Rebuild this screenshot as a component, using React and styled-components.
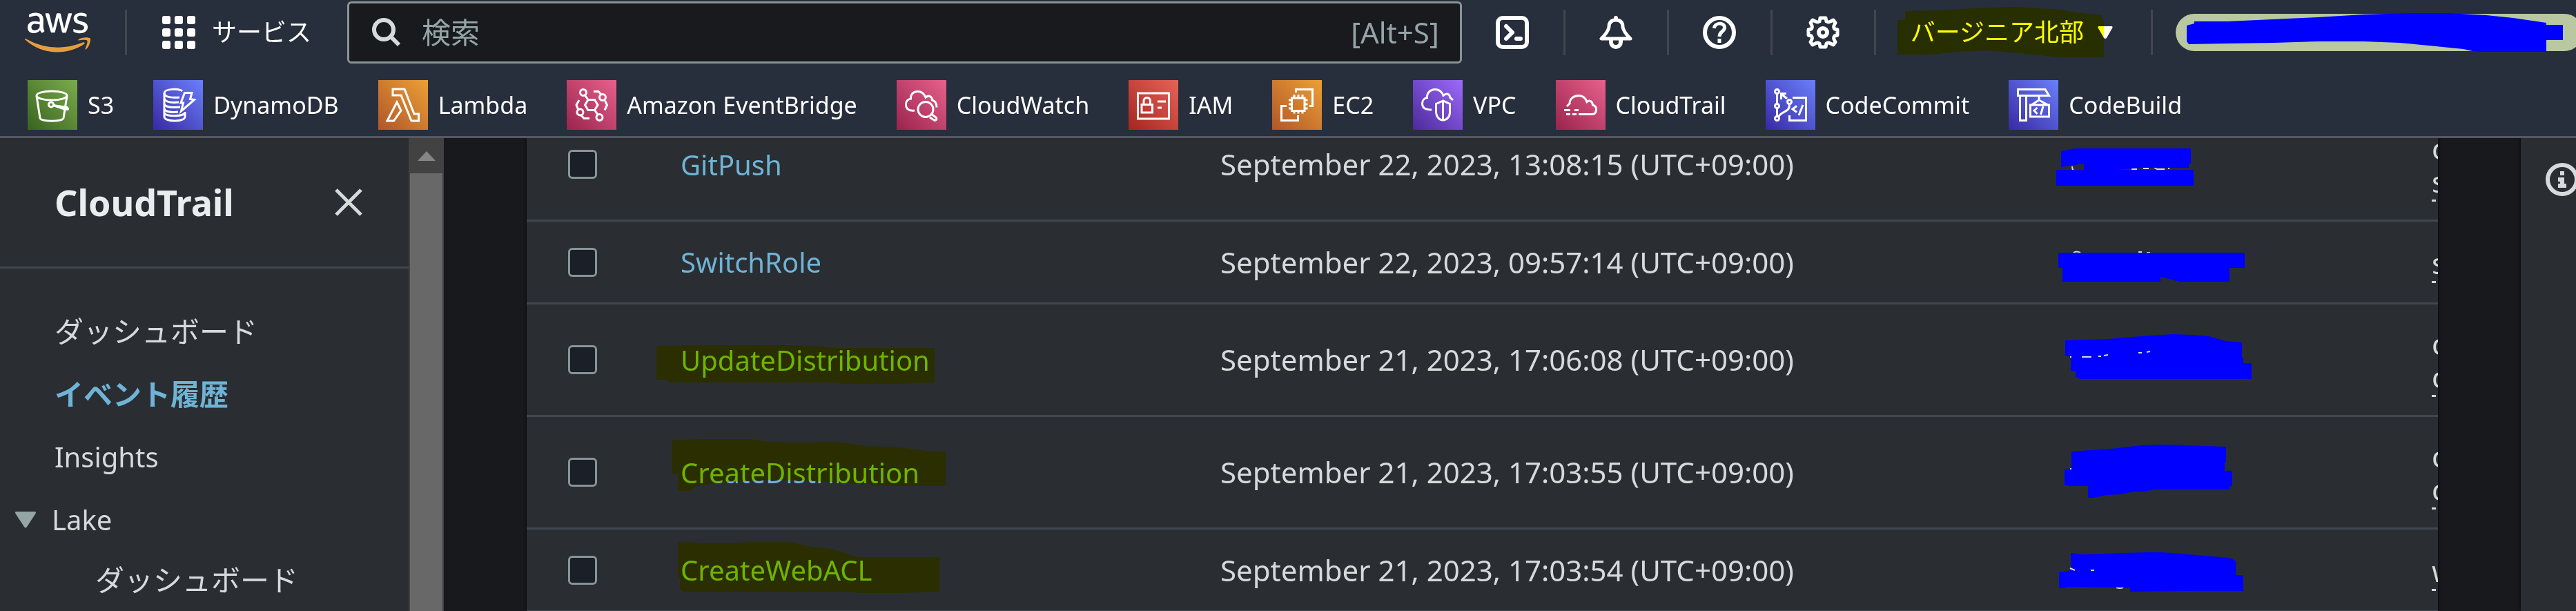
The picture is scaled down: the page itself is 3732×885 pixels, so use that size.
import React, { useState } from 'react'
import styled, { createGlobalStyle } from 'styled-components'
import { FaAws } from 'react-icons/fa'

const GlobalStyle = createGlobalStyle`
    * {
        box-sizing: border-box;
    }

    body {
        margin: 0;
        background: #18191d;
        color: #d5dbdb;
        font-family: "Noto Sans", "Noto Sans CJK JP", sans-serif;
        font-size: 42px;
        line-height: 48px;
    }

    button, input {
        font: inherit;
        color: inherit;
    }

    a {
        color: inherit;
        text-decoration: none;
    }
`

const Page = styled.div`
    display: flex;
    flex-direction: column;
    height: 100vh;
`

const Header = styled.header`
    flex-shrink: 0;
    overflow: hidden;
    background: #272e3c;
    border-bottom: 3px solid #555863;
    color: #fff;
`

const TopBar = styled.div`
    display: flex;
    align-items: center;
    padding: 2px 0 0 36px;
`

const LogoLink = styled.a`
    display: flex;

    path {
        fill: url(#logo-fill);
    }
`

const LogoIcon = styled(FaAws)`
    width: 95px;
    height: 76px;
`

const PlainButton = styled.button`
    display: flex;
    align-items: center;
    flex-shrink: 0;
    padding: 0;
    border: 0;
    background: none;
    cursor: pointer;
`

const ServicesButton = styled(PlainButton)`
    height: 66px;
    margin-left: 50px;
    padding: 0 52px 0 51px;
    gap: 24px;
    border-left: 3px solid #424650;
    font-size: 36px;
    white-space: nowrap;
`

const SearchBox = styled.form`
    display: flex;
    align-items: center;
    flex: 1;
    height: 90px;
    padding: 0 30px 0 33px;
    gap: 30px;
    border: 3px solid #879596;
    border-radius: 6px;
    background: #191a1e;
    color: #95a5a6;

    input {
        flex: 1;
        min-width: 0;
        padding: 0;
        border: 0;
        outline: 0;
        background: none;
    }

    input::placeholder {
        color: #95a5a6;
        opacity: 1;
    }
`

const ToolButton = styled(PlainButton)`
    justify-content: center;
    width: 150px;
    height: 66px;
    border-right: 3px solid #424650;
`

const RegionButton = styled(PlainButton)`
    position: relative;
    height: 66px;
    padding: 0 55px 0 50px;
    gap: 20px;
    border-right: 3px solid #424650;
    font-size: 36px;
    white-space: nowrap;
`

const AccountButton = styled(PlainButton)`
    position: relative;
    width: 590px;
    height: 54px;
    margin: 0 -10px 0 33px;
    border-radius: 27px;
    background: #b9c8a1;
`

const AccountMask = styled.svg`
    position: absolute;
    left: 0;
    top: -2px;
    fill: #00f;
`

/* marker pen drawn over a label */
const Marker = styled.svg`
    position: absolute;
    left: ${(props) => props.$left}px;
    top: ${(props) => props.$top}px;
    fill: #ff0;
    mix-blend-mode: multiply;
    pointer-events: none;
`

const Favorites = styled.nav`
    display: flex;
    gap: 57px;
    padding: 24px 40px 9px;
`

const Favorite = styled.a`
    display: flex;
    align-items: center;
    gap: 15px;
    font-size: 34px;
    white-space: nowrap;
`

const Tile = styled.span`
    display: flex;
    width: 72px;
    height: 72px;
    background: linear-gradient(45deg, ${(props) => props.$from}, ${(props) => props.$to});
`

const Body = styled.div`
    display: flex;
    flex: 1;
    min-height: 0;
    overflow: hidden;
`

const Sidebar = styled.aside`
    flex: 0 0 592px;
    overflow: hidden;
    background: #2a2e33;
`

const SideHead = styled.div`
    display: flex;
    align-items: center;
    justify-content: space-between;
    height: 189px;
    padding: 0 67px 0 79px;
    border-bottom: 3px solid #414750;

    h2 {
        margin: 0;
        color: #eaeded;
        font-size: 52px;
        font-weight: 700;
    }
`

const SideList = styled.ul`
    list-style: none;
    margin: 0;
    padding: 45px 0 0 79px;
`

const SubList = styled.ul`
    list-style: none;
    margin: 0;
    padding: 0 0 0 59px;
`

const SideItem = styled.li`
    color: ${(props) => props.$active ? "#6fb4d6" : "#d5dbdb"};
    font-size: ${(props) => props.$latin ? "40px" : "42px"};
    font-weight: ${(props) => props.$active ? 700 : 400};

    > a, > button {
        display: flex;
        align-items: center;
        height: ${(props) => props.$sub ? "84px" : "91px"};
    }

    > button {
        margin-left: -57px;
        gap: 23px;
    }
`

const Scrollbar = styled.div`
    display: flex;
    flex-direction: column;
    flex: 0 0 51px;
    padding: 0 2px;
    background: #424242;
`

const ScrollUp = styled(PlainButton)`
    justify-content: center;
    height: 51px;
`

const ScrollThumb = styled.div`
    flex: 1;
    background: #686868;
`

const Content = styled.main`
    flex: 1;
    min-width: 0;
    padding: 0 120px;
    overflow: hidden;
`

const Panel = styled.section`
    height: 100%;
    overflow: hidden;
    background: #2a2e33;
    box-shadow: 0 0 4px #000;
`

/* the list is scrolled a little way under the header */
const EventTable = styled.table`
    width: 100%;
    margin-top: -42px;
    table-layout: fixed;
    border-collapse: separate;
    border-spacing: 0;

    td {
        height: 120px;
        padding: 0;
        border-bottom: 3px solid #414750;
        vertical-align: middle;
        white-space: nowrap;
    }

    tr.tall td {
        height: 163px;
    }
`

const Col = styled.col`
    width: ${(props) => props.$width};
`

const CheckBox = styled.input`
    appearance: none;
    display: block;
    width: 42px;
    height: 42px;
    margin: 0 0 0 60px;
    border: 3px solid #879596;
    border-radius: 6px;
    background: #1b1f28;

    &:checked {
        background: #6fb4d6;
    }
`

const EventLink = styled.a`
    position: relative;
    display: inline-block;
    color: #6fb4d6;
    font-size: 40px;
`

const Redacted = styled.svg`
    display: block;
    fill: #00f;

    .rest {
        fill: none;
        stroke: #d5dbdb;
        stroke-width: 2;
    }
`

const Source = styled.div`
    padding: 7px 0 5px;
    background: repeating-linear-gradient(90deg, #d5dbdb 0 6px, transparent 6px 12px) left bottom / 100% 3px no-repeat;

    span {
        display: block;
    }
`

const HelpPanel = styled.aside`
    flex: 0 0 80px;
    padding: 36px 0 0 36px;
    overflow: hidden;
    background: #2a2e33;
    box-shadow: 0 0 4px #000;
`

const favorites = [
    {
        name: "S3", from: "#38641e", to: "#7bab4d",
        icon: <>
            <ellipse cx="35" cy="22.5" rx="22" ry="6.5" />
            <path d="M13 23L18 55C19 60.500 51 60.500 52 55L57 23" />
            <circle cx="34" cy="35.500" r="3.500" />
            <path d="M37 36.500L57 39.500C61 42.500 57 43.500 52 41.500L37 36.500" />
        </>
    },
    {
        name: "DynamoDB", from: "#3829a4", to: "#6a80fa",
        icon: <>
            <path d="M42 16C38 12 16 12 16 19V53C16 61 46 61 46 53V46" />
            <path d="M16 19C16 25 28 26 38 25M16 27C18 32 27 33 37 32M16 35C18 39 28 40 39 39M16 42C18 46 26 47 36 46M16 48C20 53 40 53 46 48" />
            <path d="M45.500 18.500H56L53.500 27.500L59.500 28.500L40.500 45L43.500 33H40Z" />
        </>
    },
    {
        name: "Lambda", from: "#b05629", to: "#eca035",
        icon: <path d="M21 13H38L52 49H58.500V59H48L33 22H21ZM27 32L13 59H22.500L33 44Z" />
    },
    {
        name: "Amazon EventBridge", from: "#99244c", to: "#e8618d",
        icon: <>
            <circle cx="24" cy="18" r="4.500" />
            <circle cx="52" cy="25" r="4.500" />
            <circle cx="19.500" cy="46.500" r="4.500" />
            <circle cx="47.500" cy="54" r="4.500" />
            <path d="M31 28.500H40.500L45 36L40.500 43.500H31L26.500 36ZM26.500 22L31 28.500M40.500 43.500L45 50M39 16.500H46L50 21M21 51L25 55.500H33M18 29L14 36L17 43.500M55.500 30L58.500 36L55 43.500" />
        </>
    },
    {
        name: "CloudWatch", from: "#99244c", to: "#e8618d",
        icon: <>
            <path d="M26 44C18 45 13.500 42 13.500 35C13.500 30 17 27.500 20.500 27C20 20 25 16.500 30.500 16.500C36 16.500 40 20 42 25C47 21 51 24 51.500 29C56 30 58 34 58 39.500" />
            <circle cx="42" cy="42.500" r="11" />
            <path d="M48 54L55 58.500Q59 58 57.500 54.500L51.500 50" />
        </>
    },
    {
        name: "IAM", from: "#a62520", to: "#e56459",
        icon: <>
            <path d="M13.500 19H58.500V56H13.500Z" />
            <path d="M19 35.500H34.500V47H19ZM22 35V30C22 24 31.500 24 31.500 30V35M42 31H54M42 40H48" />
        </>
    },
    {
        name: "EC2", from: "#b05629", to: "#eca035",
        icon: <path d="M28.500 26H47V44.500H28.500ZM34.500 18V13.500H58.500V37.500H54M21 37.500H13.500V58.500H37.500V51M32 21V25M38 21V25M44 21V25M32 45V48.500M38 45V48.500M44 45V48.500M24 29H28M24 35H28M24 41H28M48 29H51.500M48 35H51.500M48 41H51.500" />
    },
    {
        name: "VPC", from: "#4c2a9b", to: "#9c6afa",
        icon: <path d="M27 43C18 43 13.500 40 13.500 34C13.500 29 17 26 20.500 25.500C20 18 26 13.500 32 13.500C38 13.500 42 17 44 22.500C49 18 53 20 54 25.500L58 29M43.500 30L33.500 34.500V47C34 53 38 58 43.500 58C49 58 53.500 53 53.500 47V34.500ZM43.500 30V58" />
    },
    {
        name: "CloudTrail", from: "#99244c", to: "#e8618d",
        icon: <path d="M16 38L20 34C20 27 26 22.500 33 22.500C39 22.500 43 26 45 31.500C49 28 53 31 53.500 36C57 37 58.500 39 58.500 42.500C58.500 47 56 49.500 52 49.500H33M12 43.500H21M27 43.500H33M15 49.500H21M24 49.500H30" />
    },
    {
        name: "CodeCommit", from: "#3829a4", to: "#6a80fa",
        icon: <>
            <circle cx="16.500" cy="16.500" r="3" />
            <circle cx="16.500" cy="37.500" r="3" />
            <circle cx="16.500" cy="55.500" r="3" />
            <circle cx="34.500" cy="31.500" r="3" />
            <path d="M16.500 20V34M16.500 41V52M18.500 53C25 43 34.500 48 34.500 35M31 27L22 19.500M22.500 28V19.500H30M39 25.500H58.500V58.500H34.500V51M45 37.500L39 42L45 46.500M54 36L48 51" />
        </>
    },
    {
        name: "CodeBuild", from: "#3829a4", to: "#6a80fa",
        icon: <path d="M13.500 13.500H53L58.500 22.500H13.500ZM16.500 23V58.500H25.500V23M44 23V29L33 36M44 29L57 36M31.500 36H58.500V53H31.500ZM41.500 40L37 44L41.500 49M50 38L46.500 50" />
    },
]

const events = [
    {
        name: "GitPush", time: "September 22, 2023, 13:08:15 (UTC+09:00)", source: ["c", "s"],
        mask: <>
            <path className="rest" d="M28 43Q28 47 30 49M114 47H122M131 46H139M146 44L151 47H162M168 43V47" />
            <path d="M12 21L32 17H200V39H197V45L130 45L90 48H45V39L12 44ZM5 48H204V71H5Z" />
        </>
    },
    {
        name: "SwitchRole", time: "September 22, 2023, 09:57:14 (UTC+09:00)", source: ["s"],
        mask: <>
            <path className="rest" d="M30 26Q34 23 40 26M124 25H129M136 26H141" />
            <path d="M8 26H278V48H256V68H184L156 61V68H14V48H8Z" />
        </>
    },
    {
        name: "UpdateDistribution", time: "September 21, 2023, 17:06:08 (UTC+09:00)", source: ["c", "c"],
        marker: { left: -35, top: 2, width: 403, height: 56, d: "M0 1L74 0H185L230 1L255 4H403V54L351 56H268L255 54H17V50H0Z" },
        mask: <>
            <path d="M18 12L80 10L128 6L175 3L202 4L226 6L251 13L274 15V37H276V45H288V68H40L33 65V57L26 56V35H18Z" />
            <path className="rest" d="M25 36H27M42 36H56M66 35H70M74 34L80 33M124 30H129M136 29L141 28" />
        </>
    },
    {
        name: "CreateDistribution", time: "September 21, 2023, 17:03:55 (UTC+09:00)", source: ["c", "c"],
        marker: { left: -13, top: -25, width: 397, height: 75, d: "M0 2L41 0H115L144 4L182 5L240 4L284 10L329 12L380 18H397V68H335L272 65L195 60L138 59L68 63L33 69L28 75H9V51H0Z" },
        mask: <>
            <path className="rest" d="M25 35H30" />
            <path d="M27 10L85 6L128 1L159 0L251 3V25H249V38H260V60H256V65H146L133 68H117L98 72L77 73L59 77H51V60H24L17 58V36H27Z" />
        </>
    },
    {
        name: "CreateWebACL", time: "September 21, 2023, 17:03:54 (UTC+09:00)", source: ["w"],
        marker: { left: -4, top: -17, width: 379, height: 74, d: "M0 0H17L33 2H84L97 0H161L196 7L224 10L260 22H379V72L320 74H260L247 72H8L3 69V51H0Z" },
        mask: <>
            <path className="rest" d="M92 65Q97 67 102 65" />
            <path d="M26 15L45 17L101 15L138 14H159L197 17L244 21L259 23L265 27V47H276V70H191L112 71V65L21 64L14 66H9V43L27 40Z" />
            <path className="rest" d="M25 37L32 40M55 40H60" />
        </>
    },
]

const toolIcons = [
    {
        label: "CloudShell",
        icon: <>
            <rect x="3" y="3" width="42" height="42" rx="7" />
            <path strokeLinecap="round" strokeLinejoin="round" d="M15 15L24 24L15 33M30 33H36" />
        </>
    },
    {
        label: "通知",
        icon: <>
            <path strokeLinecap="round" d="M24 3V5" />
            <path strokeLinejoin="round" strokeWidth="5" d="M24 6C17 6 14 10 14 16Q13 23 3 33H45Q35 23 34 16C34 10 31 6 24 6Z" />
            <path d="M17 34V38A7 7 0 0 0 31 38V34" />
        </>
    },
    {
        label: "ヘルプ",
        icon: <>
            <circle cx="24" cy="24" r="21" />
            <path strokeWidth="5" d="M16.500 18C17 9 31.500 9 31.500 17C31.500 23 24 22 24 30M24 33V39" />
        </>
    },
    {
        label: "設定",
        icon: <>
            <path
                strokeWidth="5"
                strokeLinejoin="round"
                d="M20 3H28L29 8Q32 10 35 8L39 6L42 10L40 14Q39 17 41 19L45 20V28L41 29Q39 31 40 34L42 38L39 42L35 40Q32 38 29 40L28 45H20L19 40Q16 38 13 40L9 42L6 38L8 34Q9 31 7 29L3 28V20L7 19Q9 17 8 14L6 10L9 6L13 8Q16 10 19 8Z"
            />
            <circle cx="24" cy="24" r="6" />
        </>
    },
]

const GridIcon = () => (
    <svg width="48" height="48" viewBox="0 0 48 48" fill="#fff">
        {[0, 18, 36].map((y) => [0, 18, 36].map((x) => (
            <rect key={`${x}-${y}`} x={x} y={y} width="12" height="12" rx="3" />
        )))}
    </svg>
)

const App = () => {
    const [checked, setChecked] = useState([])

    const toggle = (index) => {
        setChecked(checked.includes(index) ? checked.filter((i) => i !== index) : [...checked, index])
    }

  return (
    <Page>
        <GlobalStyle />

        <Header>
            <TopBar>
                <LogoLink href="#" aria-label="AWS">
                    <svg width="0" height="0" aria-hidden="true">
                        <linearGradient id="logo-fill" x1="0" y1="0" x2="0" y2="1">
                            <stop offset="57%" stopColor="#fff" />
                            <stop offset="57%" stopColor="#e69d3c" />
                        </linearGradient>
                    </svg>
                    <LogoIcon />
                </LogoLink>

                <ServicesButton>
                    <GridIcon />
                    サービス
                </ServicesButton>

                <SearchBox onSubmit={(e) => e.preventDefault()}>
                    <svg width="42" height="42" viewBox="0 0 42 42" fill="none" stroke="#d5dbdb" strokeWidth="6">
                        <circle cx="17" cy="17" r="14" />
                        <path d="M27 27L39 39" />
                    </svg>
                    <input type="text" placeholder="検索" aria-label="検索" />
                    <span>[Alt+S]</span>
                </SearchBox>

                {toolIcons.map((tool) => (
                    <ToolButton key={tool.label} aria-label={tool.label}>
                        <svg width="48" height="48" viewBox="0 0 48 48" fill="none" stroke="#fff" strokeWidth="6">
                            {tool.icon}
                        </svg>
                    </ToolButton>
                ))}

                <RegionButton>
                    バージニア北部
                    <svg width="22" height="18" viewBox="0 0 22 18" fill="#fff">
                        <path d="M2 0H20Q22 0 21.500 2L13 17Q11 19 9 17L0.500 2Q0 0 2 0Z" />
                    </svg>
                    <Marker $left={31} $top={-4} width="299" height="74">
                        <path d="M11 6L62 5L111 2L170 0L200 2L236 4L259 8L296 12V19L299 20V73H236L197 69L177 67L131 63L85 65L48 69H0V19H11Z" />
                    </Marker>
                </RegionButton>

                <AccountButton aria-label="アカウント">
                    <AccountMask width="590" height="58">
                        <path d="M16 19L27 16V13H75L140 10L206 7L272 3L338 1H397L450 4L489 8L537 15V18H561V40H537V57H443L430 56L417 53L377 49L325 44L272 42H206L140 44L75 45L19 46L16 42Z" />
                    </AccountMask>
                </AccountButton>
            </TopBar>

            <Favorites>
                {favorites.map((fav) => (
                    <Favorite key={fav.name} href="#">
                        <Tile $from={fav.from} $to={fav.to}>
                            <svg width="72" height="72" viewBox="0 0 72 72" fill="none" stroke="#fff" strokeWidth="3">
                                {fav.icon}
                            </svg>
                        </Tile>
                        {fav.name}
                    </Favorite>
                ))}
            </Favorites>
        </Header>

        <Body>
            <Sidebar>
                <SideHead>
                    <h2>CloudTrail</h2>
                    <PlainButton aria-label="閉じる">
                        <svg width="40" height="40" viewBox="0 0 40 40" stroke="#d5dbdb" strokeWidth="5">
                            <path d="M2 2L38 38M38 2L2 38" />
                        </svg>
                    </PlainButton>
                </SideHead>

                <SideList>
                    <SideItem><a href="#">ダッシュボード</a></SideItem>
                    <SideItem $active><a href="#">イベント履歴</a></SideItem>
                    <SideItem $latin><a href="#">Insights</a></SideItem>
                    <SideItem $latin>
                        <PlainButton>
                            <svg width="30" height="24" viewBox="0 0 30 24" fill="#95a5a6">
                                <path d="M2 0H28Q31 0 29.500 3L17 22Q15 25 13 22L0.500 3Q-1 0 2 0Z" />
                            </svg>
                            Lake
                        </PlainButton>
                        <SubList>
                            <SideItem $sub><a href="#">ダッシュボード</a></SideItem>
                        </SubList>
                    </SideItem>
                </SideList>
            </Sidebar>

            <Scrollbar>
                <ScrollUp aria-label="上へスクロール">
                    <svg width="26" height="14" viewBox="0 0 26 14" fill="#868686">
                        <path d="M13 0L26 14H0Z" />
                    </svg>
                </ScrollUp>
                <ScrollThumb />
            </Scrollbar>

            <Content>
                <Panel>
                    <EventTable>
                        <colgroup>
                            <Col $width="223px" />
                            <Col $width="782px" />
                            <Col $width="1206px" />
                            <Col $width="auto" />
                            <Col $width="9px" />
                        </colgroup>
                        <tbody>
                            {events.map((event, index) => (
                                <tr key={index} className={event.source.length > 1 ? "tall" : ""}>
                                    <td>
                                        <CheckBox
                                            type="checkbox"
                                            aria-label={event.name}
                                            checked={checked.includes(index)}
                                            onChange={() => toggle(index)}
                                        />
                                    </td>
                                    <td>
                                        <EventLink href="#">
                                            {event.name}
                                            {event.marker ? (
                                                <Marker
                                                    $left={event.marker.left}
                                                    $top={event.marker.top}
                                                    width={event.marker.width}
                                                    height={event.marker.height}
                                                >
                                                    <path d={event.marker.d} />
                                                </Marker>
                                            ) : ""}
                                        </EventLink>
                                    </td>
                                    <td>{event.time}</td>
                                    <td>
                                        <Redacted width="292" height="80">{event.mask}</Redacted>
                                    </td>
                                    <td>
                                        <Source>
                                            {event.source.map((line, i) => <span key={i}>{line}</span>)}
                                        </Source>
                                    </td>
                                </tr>
                            ))}
                        </tbody>
                    </EventTable>
                </Panel>
            </Content>

            <HelpPanel>
                <PlainButton aria-label="情報">
                    <svg width="48" height="48" viewBox="0 0 48 48">
                        <circle cx="24" cy="24" r="21" fill="none" stroke="#d5dbdb" strokeWidth="6" />
                        <path fill="#d5dbdb" d="M21 12H27V18H21ZM18 21H27V30H30V36H18V30H21V27H18Z" />
                    </svg>
                </PlainButton>
            </HelpPanel>
        </Body>
    </Page>
  )
}

export default App
